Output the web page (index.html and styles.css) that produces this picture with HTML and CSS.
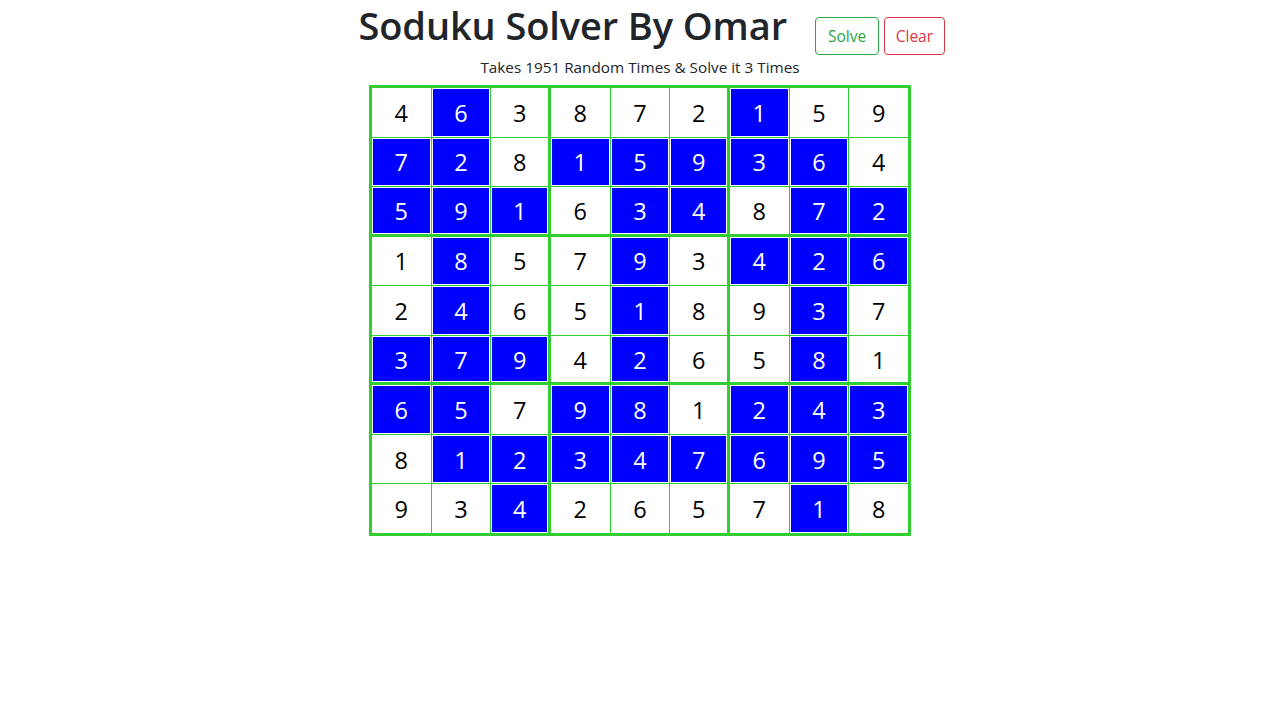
FILE: index.html
```html
<!DOCTYPE html>
<html lang="en">
<head>
<meta charset="utf-8">
<title>Soduku Solver</title>
<link rel="stylesheet" href="styles.css">
</head>
<body>
<div class="page">
  <header class="head">
    <h1 class="title">Soduku Solver By Omar</h1>
    <div class="actions">
      <button class="btn btn-solve">Solve</button>
      <button class="btn btn-clear">Clear</button>
    </div>
  </header>
  <p class="sub">Takes 1951 Random Times &amp; Solve it 3 Times</p>
  <div class="board">
    <div class="c"><span class="v">4</span></div><div class="c"><span class="v b">6</span></div><div class="c r"><span class="v">3</span></div><div class="c"><span class="v">8</span></div><div class="c"><span class="v">7</span></div><div class="c r"><span class="v">2</span></div><div class="c"><span class="v b">1</span></div><div class="c"><span class="v">5</span></div><div class="c"><span class="v">9</span></div>
    <div class="c"><span class="v b">7</span></div><div class="c"><span class="v b">2</span></div><div class="c r"><span class="v">8</span></div><div class="c"><span class="v b">1</span></div><div class="c"><span class="v b">5</span></div><div class="c r"><span class="v b">9</span></div><div class="c"><span class="v b">3</span></div><div class="c"><span class="v b">6</span></div><div class="c"><span class="v">4</span></div>
    <div class="c d"><span class="v b">5</span></div><div class="c d"><span class="v b">9</span></div><div class="c d r"><span class="v b">1</span></div><div class="c d"><span class="v">6</span></div><div class="c d"><span class="v b">3</span></div><div class="c d r"><span class="v b">4</span></div><div class="c d"><span class="v">8</span></div><div class="c d"><span class="v b">7</span></div><div class="c d"><span class="v b">2</span></div>
    <div class="c"><span class="v">1</span></div><div class="c"><span class="v b">8</span></div><div class="c r"><span class="v">5</span></div><div class="c"><span class="v">7</span></div><div class="c"><span class="v b">9</span></div><div class="c r"><span class="v">3</span></div><div class="c"><span class="v b">4</span></div><div class="c"><span class="v b">2</span></div><div class="c"><span class="v b">6</span></div>
    <div class="c"><span class="v">2</span></div><div class="c"><span class="v b">4</span></div><div class="c r"><span class="v">6</span></div><div class="c"><span class="v">5</span></div><div class="c"><span class="v b">1</span></div><div class="c r"><span class="v">8</span></div><div class="c"><span class="v">9</span></div><div class="c"><span class="v b">3</span></div><div class="c"><span class="v">7</span></div>
    <div class="c d"><span class="v b">3</span></div><div class="c d"><span class="v b">7</span></div><div class="c d r"><span class="v b">9</span></div><div class="c d"><span class="v">4</span></div><div class="c d"><span class="v b">2</span></div><div class="c d r"><span class="v">6</span></div><div class="c d"><span class="v">5</span></div><div class="c d"><span class="v b">8</span></div><div class="c d"><span class="v">1</span></div>
    <div class="c"><span class="v b">6</span></div><div class="c"><span class="v b">5</span></div><div class="c r"><span class="v">7</span></div><div class="c"><span class="v b">9</span></div><div class="c"><span class="v b">8</span></div><div class="c r"><span class="v">1</span></div><div class="c"><span class="v b">2</span></div><div class="c"><span class="v b">4</span></div><div class="c"><span class="v b">3</span></div>
    <div class="c"><span class="v">8</span></div><div class="c"><span class="v b">1</span></div><div class="c r"><span class="v b">2</span></div><div class="c"><span class="v b">3</span></div><div class="c"><span class="v b">4</span></div><div class="c r"><span class="v b">7</span></div><div class="c"><span class="v b">6</span></div><div class="c"><span class="v b">9</span></div><div class="c"><span class="v b">5</span></div>
    <div class="c"><span class="v">9</span></div><div class="c"><span class="v">3</span></div><div class="c r"><span class="v b">4</span></div><div class="c"><span class="v">2</span></div><div class="c"><span class="v">6</span></div><div class="c r"><span class="v">5</span></div><div class="c"><span class="v">7</span></div><div class="c"><span class="v b">1</span></div><div class="c"><span class="v">8</span></div>
  </div>
</div>
</body>
</html>
```
FILE: styles.css
```css
html, body {
  margin: 0;
  padding: 0;
  background: #fff;
}
body {
  font-family: "Open Sans", "Noto Sans", sans-serif;
  color: #212529;
}
.page {
  display: flex;
  flex-direction: column;
  align-items: center;
}
.head {
  display: flex;
  align-items: flex-start;
  padding-left: 23px;
  height: 56px;
}
.title {
  margin: 1px 0 0;
  font-size: 38px;
  font-weight: 600;
  line-height: 48px;
  letter-spacing: -0.1px;
}
.actions {
  display: flex;
  gap: 5px;
  margin-left: 28px;
  margin-top: 17px;
}
.btn {
  font-family: inherit;
  font-size: 15.5px;
  line-height: 24px;
  padding: 6px 12px;
  background: #fff;
  border: 1px solid;
  border-radius: 4px;
}
.btn-solve {
  color: #28a745;
  border-color: #28a745;
}
.btn-clear {
  color: #dc3545;
  border-color: #dc3545;
  padding: 6px 10.5px;
}
.sub {
  margin: 0 0 7px;
  font-size: 15.3px;
  line-height: 22px;
}
.board {
  display: grid;
  grid-template-columns: repeat(9, 1fr);
  grid-template-rows: repeat(9, 1fr);
  gap: 1px;
  padding: 3px;
  box-sizing: border-box;
  width: 542px;
  height: 451px;
  background: #32cd32;
}
.c {
  display: flex;
  padding: 1px;
  background: #fff;
}
.c.r {
  margin-right: 2px;
}
.c.d {
  margin-bottom: 2px;
}
.v {
  flex: 1;
  display: flex;
  align-items: center;
  justify-content: center;
  padding-top: 1px;
  font-size: 23.5px;
  color: #000;
}
.v.b {
  background: #0000ff;
  color: #fff;
}
```
